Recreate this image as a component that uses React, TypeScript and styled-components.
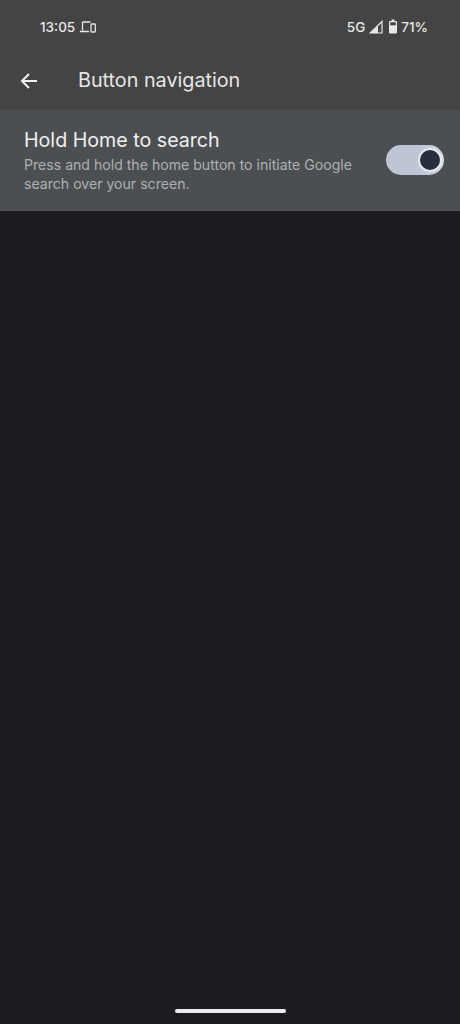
import styled, { createGlobalStyle } from "styled-components"

const Global = createGlobalStyle`
html, body {
  margin: 0;
  padding: 0;
  background: #1c1c20;
}
`

const Screen = styled.div`
  width: 460px;
  height: 1024px;
  display: flex;
  flex-direction: column;
  background: #1c1c20;
  font-family: Inter, Roboto, "Noto Sans", sans-serif;
  overflow: hidden;
`

const Header = styled.header`
  height: 109px;
  background: #444444;
  display: flex;
  flex-direction: column;
`

const StatusBar = styled.div`
  height: 53px;
  padding: 0 32px 0 40px;
  display: flex;
  align-items: center;
  justify-content: space-between;
  color: #e8e8e8;
  font-size: 13.5px;
  font-weight: 500;
`

const StatusGroup = styled.div<{ $gap: number }>`
  display: flex;
  align-items: center;
  gap: ${(p) => p.$gap}px;
`

const TitleBar = styled.div`
  height: 56px;
  padding: 0 0 0 20px;
  display: flex;
  align-items: flex-start;
  gap: 40px;
`

const Title = styled.h1`
  margin: -1px 0 0;
  color: #e6e6e6;
  font-size: 19.75px;
  font-weight: 400;
  line-height: 56px;
`

const BackIcon = styled.svg`
  width: 18px;
  height: 18px;
  margin-top: 19px;
`

const Row = styled.section`
  height: 102px;
  background: #4c4f52;
  border-top: 1px solid #484848;
  box-sizing: border-box;
  padding: 0 16px 0 24px;
  display: flex;
  align-items: center;
  justify-content: space-between;
`

const RowText = styled.div`
  width: 345px;
  margin-top: -2px;
`

const RowTitle = styled.div`
  color: #efefef;
  font-size: 19.65px;
  line-height: 26px;
`

const RowBody = styled.div`
  color: #aeb0b2;
  font-size: 14.1px;
  line-height: 19px;
  margin-top: 2px;
`

const Switch = styled.div`
  width: 58px;
  height: 30px;
  border-radius: 15px;
  background: linear-gradient(90deg, #bfc5d6 60%, #d5dae4);
  display: flex;
  align-items: center;
  justify-content: flex-end;
  padding-right: 2px;
  box-sizing: border-box;
  margin-top: -2px;
`

const Thumb = styled.div`
  width: 24px;
  height: 24px;
  box-sizing: border-box;
  border-radius: 50%;
  background: #262f3b;
  border: 2px solid #e6e9ef;
`

const Body = styled.main`
  flex: 1;
  display: flex;
  align-items: flex-end;
  justify-content: center;
  padding-bottom: 11px;
`

const HomeBar = styled.div`
  width: 111px;
  height: 4px;
  border-radius: 2px;
  background: #ececf0;
`

export default function App() {
  return (
    <Screen>
      <Global />
      <Header>
        <StatusBar>
          <StatusGroup $gap={5}>
            <span>13:05</span>
            <svg width="16" height="12" viewBox="0 0 16 12" fill="none" stroke="#e8e8e8" strokeWidth="1.3">
              <path d="M2.5 1h8M2.5 1v8.5M0 10.5h9" />
              <rect x="11" y="3" width="4.3" height="8" rx="0.8" />
            </svg>
          </StatusGroup>
          <StatusGroup $gap={4}>
            <span>5G</span>
            <svg width="14" height="14" viewBox="0 0 14 14" fill="none">
              <path d="M13 1.5V13H1z" stroke="#e8e8e8" strokeWidth="1.2" />
              <path d="M9 6V13H1.5z" fill="#e8e8e8" />
            </svg>
            <svg width="8" height="15" viewBox="0 0 8 15" style={{ marginLeft: 2 }}>
              <path d="M2.5 0.5h3v1.5h1.5a1 1 0 0 1 1 1v10.5a1 1 0 0 1-1 1H1a1 1 0 0 1-1-1V3a1 1 0 0 1 1-1h1.5z" fill="#e8e8e8" />
              <rect x="1.2" y="3.3" width="5.6" height="3" fill="#444444" />
            </svg>
            <span>71%</span>
          </StatusGroup>
        </StatusBar>
        <TitleBar>
          <BackIcon viewBox="0 0 18 18" fill="none" stroke="#f2f2f2" strokeWidth="2">
            <path d="M17 9H2M9 2L2 9l7 7" />
          </BackIcon>
          <Title>Button navigation</Title>
        </TitleBar>
      </Header>
      <Row>
        <RowText>
          <RowTitle>Hold Home to search</RowTitle>
          <RowBody>Press and hold the home button to initiate Google search over your screen.</RowBody>
        </RowText>
        <Switch>
          <Thumb />
        </Switch>
      </Row>
      <Body>
        <HomeBar />
      </Body>
    </Screen>
  )
}
